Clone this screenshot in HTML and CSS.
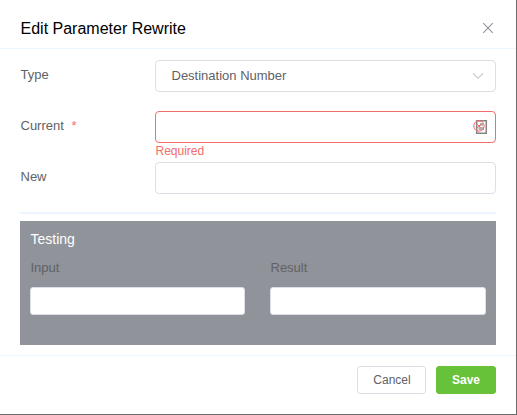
FILE: index.html
```html
<!DOCTYPE html>
<html lang="en">
<head>
<meta charset="utf-8">
<title>Edit Parameter Rewrite</title>
<link rel="stylesheet" href="styles.css">
</head>
<body>
<main class="dialog">
  <header class="header">
    <h1 class="title">Edit Parameter Rewrite</h1>
    <svg class="close" viewBox="0 0 12 12"><path d="M1.2 1.2l9.6 9.6M10.8 1.2l-9.6 9.6"/></svg>
  </header>
  <form class="body">
    <div class="row row-type">
      <span class="label">Type</span>
      <div class="control select"><span>Destination Number</span>
        <svg class="chevron" viewBox="0 0 12 8"><path d="M1 1.3l5 5 5-5"/></svg>
      </div>
    </div>
    <div class="row row-current">
      <span class="label">Current <span class="star">*</span></span>
      <div class="field">
        <div class="control invalid">
          <svg class="status" viewBox="0 0 16 16">
            <path class="card" d="M4.7 1.7h9.6v12.6H4.7z"/>
            <path class="figure" d="M8 4h3v3H8zM6.5 8H12v3H6.5z"/>
            <circle class="error" cx="7" cy="7" r="5.2"/>
            <path class="error" d="M5.2 5.2l3.6 3.6m0-3.6L5.2 8.8"/>
          </svg>
        </div>
        <div class="message">Required</div>
      </div>
    </div>
    <div class="row">
      <span class="label">New</span>
      <div class="control"></div>
    </div>
    <section class="testing">
      <h2 class="testing-title">Testing</h2>
      <div class="columns">
        <div><div class="caption">Input</div><div class="box"></div></div>
        <div><div class="caption">Result</div><div class="box"></div></div>
      </div>
    </section>
  </form>
  <footer class="footer">
    <button class="button cancel">Cancel</button>
    <button class="button save">Save</button>
  </footer>
</main>
</body>
</html>
```
FILE: styles.css
```css
* { box-sizing: border-box; }
body { margin: 0; font-family: "Liberation Sans", Arial, sans-serif; color: #606266; font-size: 13px; }
.dialog { width: 517px; height: 415px; background: #fff; border-right: 1px solid #6b6b6b; border-bottom: 1px solid #6b6b6b; overflow: hidden; }
.header { height: 49px; padding: 8px 22px 0 20.5px; display: flex; align-items: center; justify-content: space-between; border-bottom: 1px solid #ecf5ff; }
.title { margin: 0; padding-top: 2px; font-size: 16px; font-weight: 400; line-height: 24px; color: #000; }
.close { width: 12px; height: 12px; fill: none; stroke: #909399; stroke-width: 1.1; }
.body { height: 306px; padding: 11px 20px 0; }
.row { display: flex; height: 32px; }
.row-type { margin-bottom: 19px; }
.row-current { height: 51px; }
.label { width: 135px; flex: none; padding-left: 0.5px; line-height: 30px; }
.star { color: #f56c6c; margin-left: 4px; }
.field { flex: 1; }
.control { height: 32px; flex: 1; border: 1px solid #dcdfe6; border-radius: 4px; }
.select { display: flex; align-items: center; justify-content: space-between; padding: 0 11px 0 15.5px; }
.select span { padding-bottom: 2px; }
.chevron { width: 12px; height: 8px; fill: none; stroke: #c0c4cc; stroke-width: 1.1; }
.invalid { border-color: #f56c6c; display: flex; align-items: center; justify-content: flex-end; padding-right: 7px; }
.status { width: 16px; height: 16px; fill: none; }
.card { stroke: #858585; stroke-width: 1.5; }
.figure { fill: #b0b0b5; }
.error { stroke: #f56c6c; stroke-width: 1; }
.message { color: #f56c6c; font-size: 12px; line-height: 16px; padding-left: 0.5px; }
.testing { margin-top: 18px; height: 133px; border-top: 2px solid #ecf5ff; padding: 15px 10px 0; background: linear-gradient(#fff 7px, #909399 7px); }
.testing-title { margin: 0; padding-left: 0.5px; color: #fff; font-size: 14px; font-weight: 400; line-height: 20px; }
.columns { display: grid; grid-template-columns: 215px 216px; gap: 25px; margin-top: 10px; }
.caption { line-height: 18px; padding-left: 0.5px; }
.box { height: 28px; margin-top: 10px; background: #fff; border: 1px solid #dcdfe6; border-radius: 3px; }
.footer { height: 59px; padding: 10px 20px 0; border-top: 1px solid #ecf5ff; display: flex; justify-content: flex-end; gap: 10px; }
.button { height: 28px; padding: 0; border: 1px solid #dcdfe6; border-radius: 3px; background: #fff; font: 12px "Liberation Sans", Arial, sans-serif; color: #606266; }
.cancel { width: 69px; padding-left: 1px; }
.save { width: 60px; background: #67c23a; border-color: #67c23a; color: #fff; font-weight: 700; }
```
